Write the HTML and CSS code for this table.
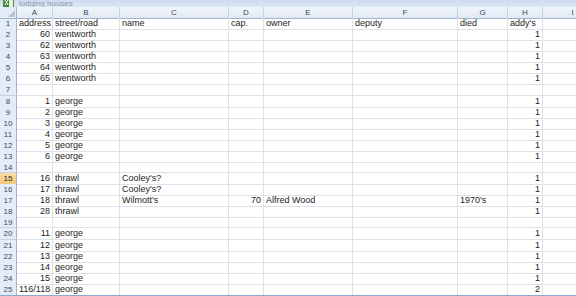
FILE: index.html
```html
<!DOCTYPE html>
<html>
<head>
<meta charset="utf-8">
<link rel="stylesheet" href="styles.css">
</head>
<body>
<div class="app">
  <div class="titlebar">
    <svg class="icon" width="11" height="7" viewBox="0 3 11 7"><rect x="0.5" y="0.5" width="10" height="10" fill="#e8f0e0" stroke="#5b8a3a"/><rect x="1" y="1" width="5" height="9" fill="#3f8a2f"/><path d="M2 3 L5 8 M5 3 L2 8" stroke="#fff" stroke-width="1"/></svg>
    <span class="title">lodging houses</span>
  </div>
  <div class="sheet">
    <div class="row hdr">
      <div class="corner"><span class="tri"></span></div>
      <div class="ch">A</div><div class="ch">B</div><div class="ch">C</div><div class="ch">D</div><div class="ch">E</div><div class="ch">F</div><div class="ch">G</div><div class="ch">H</div><div class="ch">I</div>
    </div>
    <div class="row"><div class="rh">1</div><div class="c">address</div><div class="c">street/road</div><div class="c">name</div><div class="c">cap.</div><div class="c">owner</div><div class="c">deputy</div><div class="c">died</div><div class="c">addy's</div><div class="c"></div></div>
    <div class="row"><div class="rh">2</div><div class="c n">60</div><div class="c">wentworth</div><div class="c"></div><div class="c"></div><div class="c"></div><div class="c"></div><div class="c"></div><div class="c n">1</div><div class="c"></div></div>
    <div class="row"><div class="rh">3</div><div class="c n">62</div><div class="c">wentworth</div><div class="c"></div><div class="c"></div><div class="c"></div><div class="c"></div><div class="c"></div><div class="c n">1</div><div class="c"></div></div>
    <div class="row"><div class="rh">4</div><div class="c n">63</div><div class="c">wentworth</div><div class="c"></div><div class="c"></div><div class="c"></div><div class="c"></div><div class="c"></div><div class="c n">1</div><div class="c"></div></div>
    <div class="row"><div class="rh">5</div><div class="c n">64</div><div class="c">wentworth</div><div class="c"></div><div class="c"></div><div class="c"></div><div class="c"></div><div class="c"></div><div class="c n">1</div><div class="c"></div></div>
    <div class="row"><div class="rh">6</div><div class="c n">65</div><div class="c">wentworth</div><div class="c"></div><div class="c"></div><div class="c"></div><div class="c"></div><div class="c"></div><div class="c n">1</div><div class="c"></div></div>
    <div class="row"><div class="rh">7</div><div class="c"></div><div class="c"></div><div class="c"></div><div class="c"></div><div class="c"></div><div class="c"></div><div class="c"></div><div class="c"></div><div class="c"></div></div>
    <div class="row"><div class="rh">8</div><div class="c n">1</div><div class="c">george</div><div class="c"></div><div class="c"></div><div class="c"></div><div class="c"></div><div class="c"></div><div class="c n">1</div><div class="c"></div></div>
    <div class="row"><div class="rh">9</div><div class="c n">2</div><div class="c">george</div><div class="c"></div><div class="c"></div><div class="c"></div><div class="c"></div><div class="c"></div><div class="c n">1</div><div class="c"></div></div>
    <div class="row"><div class="rh">10</div><div class="c n">3</div><div class="c">george</div><div class="c"></div><div class="c"></div><div class="c"></div><div class="c"></div><div class="c"></div><div class="c n">1</div><div class="c"></div></div>
    <div class="row"><div class="rh">11</div><div class="c n">4</div><div class="c">george</div><div class="c"></div><div class="c"></div><div class="c"></div><div class="c"></div><div class="c"></div><div class="c n">1</div><div class="c"></div></div>
    <div class="row"><div class="rh">12</div><div class="c n">5</div><div class="c">george</div><div class="c"></div><div class="c"></div><div class="c"></div><div class="c"></div><div class="c"></div><div class="c n">1</div><div class="c"></div></div>
    <div class="row"><div class="rh">13</div><div class="c n">6</div><div class="c">george</div><div class="c"></div><div class="c"></div><div class="c"></div><div class="c"></div><div class="c"></div><div class="c n">1</div><div class="c"></div></div>
    <div class="row"><div class="rh">14</div><div class="c"></div><div class="c"></div><div class="c"></div><div class="c"></div><div class="c"></div><div class="c"></div><div class="c"></div><div class="c"></div><div class="c"></div></div>
    <div class="row"><div class="rh active">15</div><div class="c n">16</div><div class="c">thrawl</div><div class="c">Cooley's?</div><div class="c"></div><div class="c"></div><div class="c"></div><div class="c"></div><div class="c n">1</div><div class="c"></div></div>
    <div class="row"><div class="rh">16</div><div class="c n">17</div><div class="c">thrawl</div><div class="c">Cooley's?</div><div class="c"></div><div class="c"></div><div class="c"></div><div class="c"></div><div class="c n">1</div><div class="c"></div></div>
    <div class="row"><div class="rh">17</div><div class="c n">18</div><div class="c">thrawl</div><div class="c">Wilmott's</div><div class="c n">70</div><div class="c">Alfred Wood</div><div class="c"></div><div class="c">1970's</div><div class="c n">1</div><div class="c"></div></div>
    <div class="row"><div class="rh">18</div><div class="c n">28</div><div class="c">thrawl</div><div class="c"></div><div class="c"></div><div class="c"></div><div class="c"></div><div class="c"></div><div class="c n">1</div><div class="c"></div></div>
    <div class="row"><div class="rh">19</div><div class="c"></div><div class="c"></div><div class="c"></div><div class="c"></div><div class="c"></div><div class="c"></div><div class="c"></div><div class="c"></div><div class="c"></div></div>
    <div class="row"><div class="rh">20</div><div class="c n">11</div><div class="c">george</div><div class="c"></div><div class="c"></div><div class="c"></div><div class="c"></div><div class="c"></div><div class="c n">1</div><div class="c"></div></div>
    <div class="row"><div class="rh">21</div><div class="c n">12</div><div class="c">george</div><div class="c"></div><div class="c"></div><div class="c"></div><div class="c"></div><div class="c"></div><div class="c n">1</div><div class="c"></div></div>
    <div class="row"><div class="rh">22</div><div class="c n">13</div><div class="c">george</div><div class="c"></div><div class="c"></div><div class="c"></div><div class="c"></div><div class="c"></div><div class="c n">1</div><div class="c"></div></div>
    <div class="row"><div class="rh">23</div><div class="c n">14</div><div class="c">george</div><div class="c"></div><div class="c"></div><div class="c"></div><div class="c"></div><div class="c"></div><div class="c n">1</div><div class="c"></div></div>
    <div class="row"><div class="rh">24</div><div class="c n">15</div><div class="c">george</div><div class="c"></div><div class="c"></div><div class="c"></div><div class="c"></div><div class="c"></div><div class="c n">1</div><div class="c"></div></div>
    <div class="row"><div class="rh">25</div><div class="c">116/118</div><div class="c">george</div><div class="c"></div><div class="c"></div><div class="c"></div><div class="c"></div><div class="c"></div><div class="c n">2</div><div class="c"></div></div>
  </div>
  <div class="bottom"><div class="tabs"></div><div class="scroll"></div></div>
</div>
</body>
</html>
```

FILE: styles.css
```css
html, body {
  margin: 0;
  padding: 0;
  background: #ffffff;
}
body {
  width: 576px;
  height: 296px;
  overflow: hidden;
  font-family: "Liberation Sans", Arial, sans-serif;
  font-size: 9px;
  color: #1e1e1e;
}
.app {
  display: flex;
  flex-direction: column;
  width: 576px;
  height: 296px;
  overflow: hidden;
}
.titlebar {
  height: 7px;
  flex: none;
  background: linear-gradient(#cfdcee, #dde7f4);
  display: flex;
  align-items: flex-end;
  gap: 5px;
  padding-left: 3px;
  overflow: hidden;
}
.icon {
  flex: none;
  display: block;
}
.title {
  color: #8a98ac;
  font-size: 8px;
  line-height: 7px;
  height: 7px;
}
.sheet {
  flex: none;
  display: flex;
  flex-direction: column;
}
.row {
  display: grid;
  grid-template-columns: 17px 36px 67px 109px 35px 89px 105px 50px 35px 60px;
  height: 11.08px;
}
.row.hdr {
  height: 11px;
}
.corner {
  background: #e4ecf7;
  border-right: 1px solid #9eb6ce;
  border-bottom: 1px solid #9eb6ce;
  position: relative;
}
.tri {
  position: absolute;
  right: 1px;
  bottom: 1px;
  width: 0;
  height: 0;
  border-left: 7px solid transparent;
  border-bottom: 7px solid #b6c6da;
}
.ch {
  background: linear-gradient(#f1f5fb, #e1e9f5);
  border-right: 1px solid #c5d2e3;
  border-bottom: 1px solid #9eb6ce;
  text-align: center;
  color: #3a4a5e;
  font-size: 8px;
  line-height: 11px;
}
.rh {
  background: #e4ecf7;
  border-right: 1px solid #9eb6ce;
  border-bottom: 1px solid #c5d2e3;
  text-align: center;
  color: #3a4a5e;
  font-size: 8px;
  line-height: 11px;
  overflow: hidden;
}
.rh.active {
  background: linear-gradient(#f9dca4, #f5c77c);
  color: #2a2a2a;
}
.c {
  border-right: 1px solid #dde2ea;
  border-bottom: 1px solid #dde2ea;
  padding: 0 2px;
  line-height: 11px;
  white-space: nowrap;
  overflow: visible;
}
.c.n {
  text-align: right;
}
.bottom {
  flex: 1;
  display: flex;
  min-height: 1px;
  border-top: 1px solid #8ea9cf;
}
.tabs {
  width: 140px;
  background: #c9c9c9;
}
.scroll {
  flex: 1;
  background: #dbe5f3;
}
```
